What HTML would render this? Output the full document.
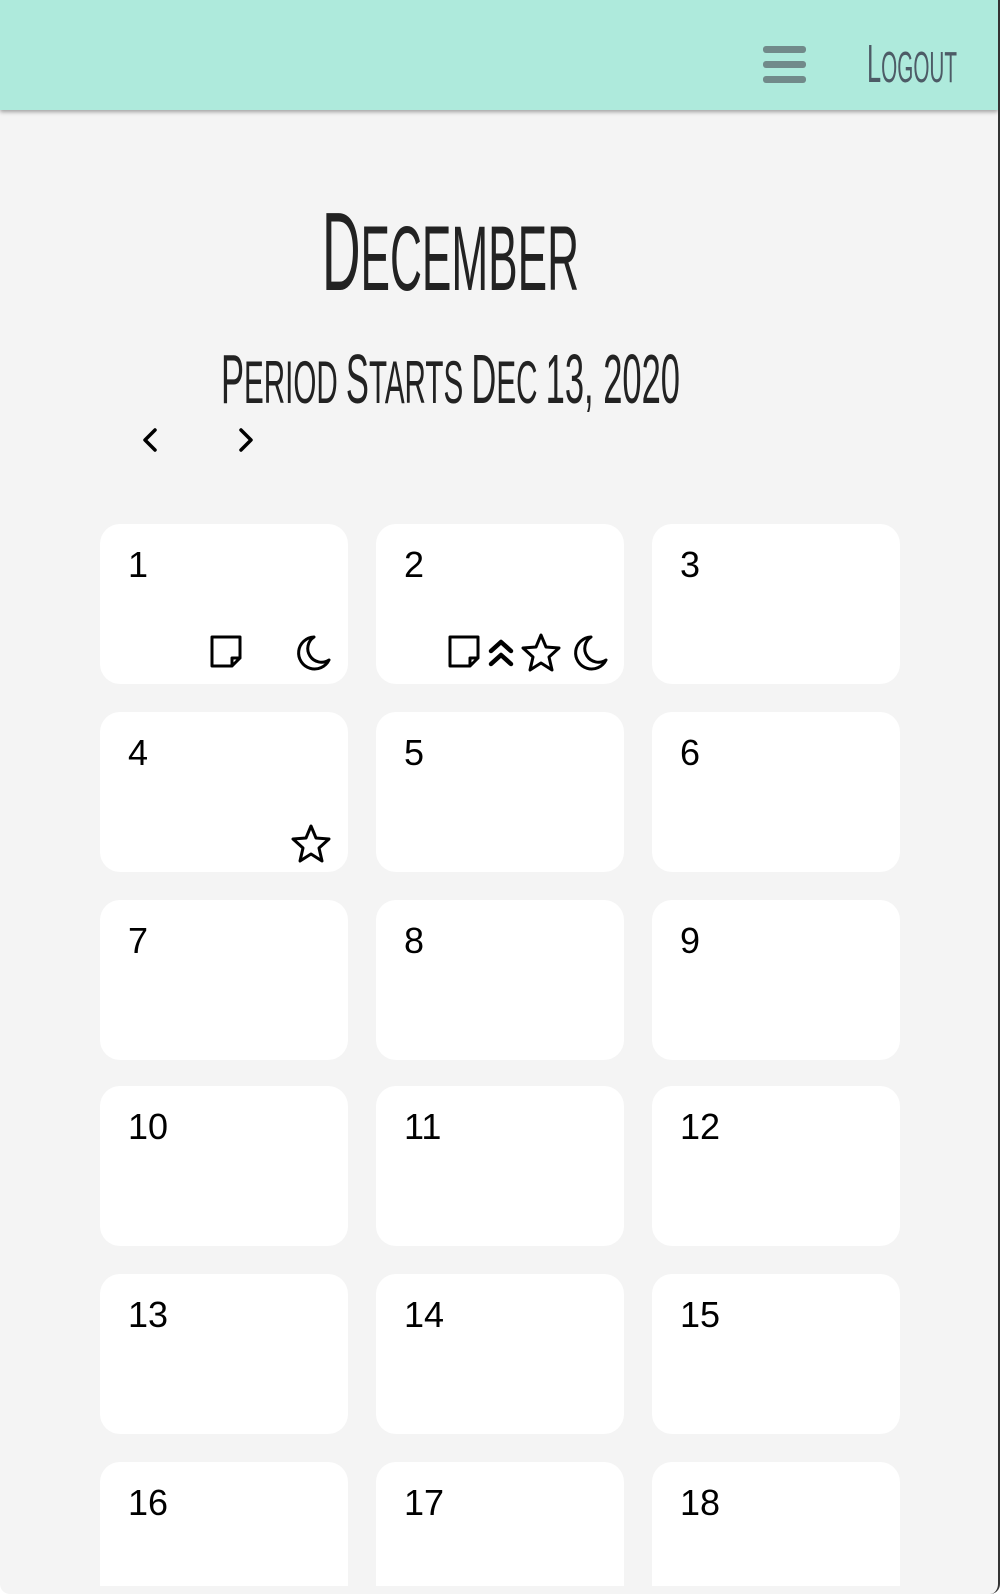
<!DOCTYPE html>
<html><head><meta charset="utf-8"><style>
html,body{margin:0;padding:0;width:1002px;height:1594px;overflow:hidden;background:#fff}
.frame{position:absolute;left:0;top:0;width:1000px;height:1594px;background:#f4f4f4;border-radius:0 0 10px 10px;border-right:2px solid #333;box-sizing:border-box;overflow:hidden}
.hdr{position:absolute;left:0;top:0;width:998px;height:110px;background:#aeeadc;box-shadow:0 2px 4px rgba(0,0,0,.35)}
.card{position:absolute;width:248px;height:160px;background:#fff;border-radius:20px}
.num{position:absolute;left:28px;top:20px;font:36px "Liberation Sans",sans-serif;color:#000}
svg.i{position:absolute;fill:none;stroke:#000;stroke-width:3;stroke-linejoin:round;stroke-linecap:round}
</style></head><body>
<div class="frame">
<div class="hdr">
 <div style="position:absolute;left:763px;top:46px;width:43px;height:7px;background:#718a8a;border-radius:3px"></div>
 <div style="position:absolute;left:763px;top:61px;width:43px;height:7px;background:#718a8a;border-radius:3px"></div>
 <div style="position:absolute;left:763px;top:76px;width:43px;height:7px;background:#718a8a;border-radius:3px"></div>
</div>
<svg style="position:absolute;left:0;top:0" width="1000" height="460">
 <text x="867" y="82" textLength="90" lengthAdjust="spacingAndGlyphs" font-family="Liberation Sans, sans-serif" fill="#4d5b66" font-size="54">L<tspan font-size="44">OGOUT</tspan></text>
 <text x="322" y="290" textLength="257" lengthAdjust="spacingAndGlyphs" font-family="Liberation Sans, sans-serif" fill="#222" font-size="111">D<tspan font-size="92">ECEMBER</tspan></text>
 <text x="221" y="403" textLength="459" lengthAdjust="spacingAndGlyphs" font-family="Liberation Sans, sans-serif" fill="#222" font-size="70">P<tspan font-size="60">ERIOD </tspan>S<tspan font-size="60">TARTS </tspan>D<tspan font-size="60">EC </tspan>13, 2020</text>
 <path d="M155 430 L145 440 L155 450" fill="none" stroke="#000" stroke-width="3.5" stroke-linecap="round" stroke-linejoin="round"/>
 <path d="M241 430 L251 440 L241 450" fill="none" stroke="#000" stroke-width="3.5" stroke-linecap="round" stroke-linejoin="round"/>
</svg>

<div class="card" style="left:100px;top:524px"><div class="num">1</div>
 <svg class="i" style="left:108px;top:111px" width="36" height="34" viewBox="0 0 36 34"><path d="M4 2 H32 V23 L24 31 H4 Z M32 23 H24 V31"/></svg>
 <svg class="i" style="left:194px;top:110px" width="38" height="38" viewBox="0 0 38 38"><path d="M20 3 A16 16 0 1 0 35 26 A12 12 0 0 1 20 3 Z"/></svg>
</div>
<div class="card" style="left:376px;top:524px"><div class="num">2</div>
 <svg class="i" style="left:70px;top:111px" width="36" height="34" viewBox="0 0 36 34"><path d="M4 2 H32 V23 L24 31 H4 Z M32 23 H24 V31"/></svg>
 <svg class="i" style="left:111px;top:113px;stroke-width:4.5" width="28" height="32" viewBox="0 0 28 32"><path d="M4 14 L14 5 L24 14 M4 27 L14 18 L24 27"/></svg>
 <svg class="i" style="left:144px;top:108px" width="42" height="42" viewBox="0 0 42 42"><path d="M21 3 L26 15 L39 16 L29 25 L32 38 L21 31 L10 38 L13 25 L3 16 L16 15 Z"/></svg>
 <svg class="i" style="left:195px;top:110px" width="38" height="38" viewBox="0 0 38 38"><path d="M20 3 A16 16 0 1 0 35 26 A12 12 0 0 1 20 3 Z"/></svg>
</div>
<div class="card" style="left:652px;top:524px"><div class="num">3</div></div>

<div class="card" style="left:100px;top:712px"><div class="num">4</div>
 <svg class="i" style="left:190px;top:111px" width="42" height="42" viewBox="0 0 42 42"><path d="M21 3 L26 15 L39 16 L29 25 L32 38 L21 31 L10 38 L13 25 L3 16 L16 15 Z"/></svg>
</div>
<div class="card" style="left:376px;top:712px"><div class="num">5</div></div>
<div class="card" style="left:652px;top:712px"><div class="num">6</div></div>

<div class="card" style="left:100px;top:900px"><div class="num">7</div></div>
<div class="card" style="left:376px;top:900px"><div class="num">8</div></div>
<div class="card" style="left:652px;top:900px"><div class="num">9</div></div>

<div class="card" style="left:100px;top:1086px"><div class="num">10</div></div>
<div class="card" style="left:376px;top:1086px"><div class="num">11</div></div>
<div class="card" style="left:652px;top:1086px"><div class="num">12</div></div>

<div class="card" style="left:100px;top:1274px"><div class="num">13</div></div>
<div class="card" style="left:376px;top:1274px"><div class="num">14</div></div>
<div class="card" style="left:652px;top:1274px"><div class="num">15</div></div>

<div style="position:absolute;left:0;top:0;width:1000px;height:1586px;overflow:hidden">
<div class="card" style="left:100px;top:1462px"><div class="num">16</div></div>
<div class="card" style="left:376px;top:1462px"><div class="num">17</div></div>
<div class="card" style="left:652px;top:1462px"><div class="num">18</div></div>
</div>
</div>
</body></html>
